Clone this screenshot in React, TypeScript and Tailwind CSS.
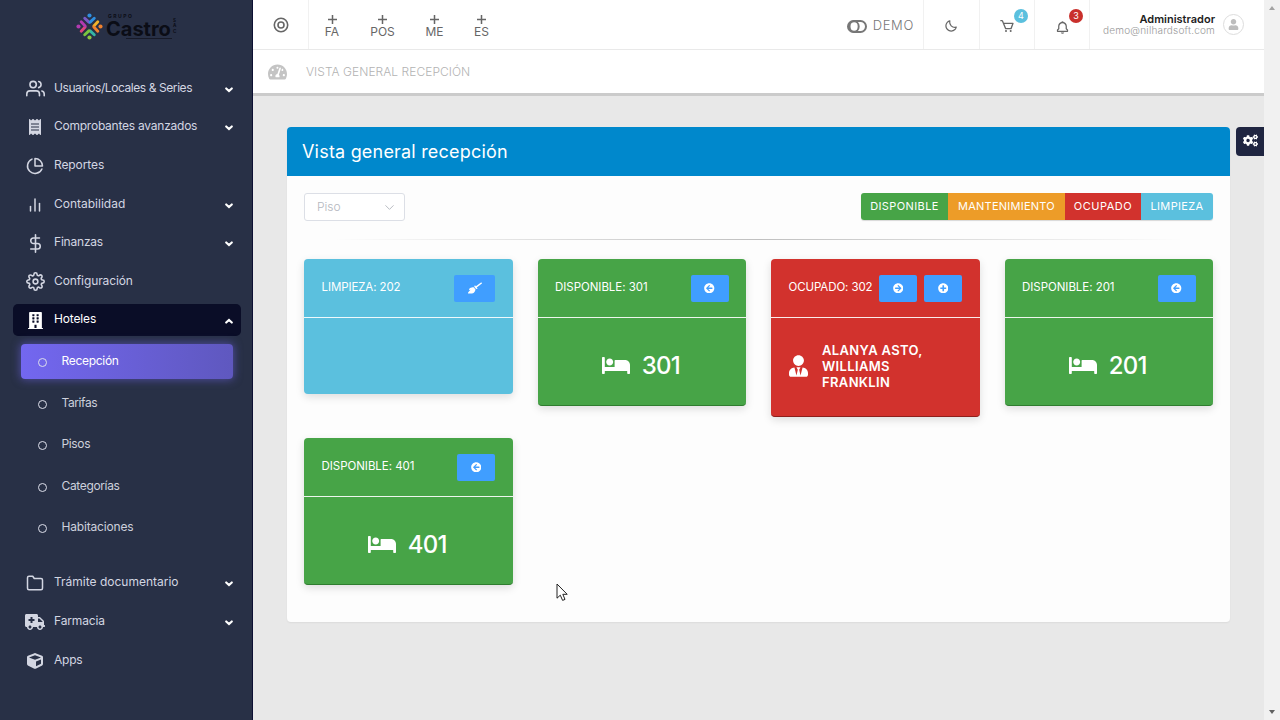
import type { ReactNode } from "react";
import {
  FiUsers,
  FiPieChart,
  FiBarChart2,
  FiDollarSign,
  FiSettings,
  FiFolder,
  FiChevronDown,
} from "react-icons/fi";
import {
  FaReceipt,
  FaBuilding,
  FaAmbulance,
  FaCube,
  FaTachometerAlt,
  FaBed,
  FaUserTie,
  FaBroom,
  FaArrowCircleLeft,
  FaArrowCircleRight,
  FaPlusCircle,
  FaCogs,
  FaUser,
} from "react-icons/fa";
import { BiCart, BiBell, BiMoon } from "react-icons/bi";

function Logo() {
  const petals = [
    { angle: 0, left: "#7a5bc7", right: "#2f8fe0", dot: "#2f8fe0" },
    { angle: 90, left: "#f3b229", right: "#f0822e", dot: "#f0822e" },
    { angle: 180, left: "#35b6a5", right: "#7cc63f", dot: "#8cc63f" },
    { angle: 270, left: "#e0457b", right: "#b13ab0", dot: "#b13ab0" },
  ];
  return (
    <div className="ml-[76px] flex h-[28px] w-[102px] items-center">
      <svg viewBox="-13 -13 26 26" className="h-[27px] w-[27px] shrink-0">
        {petals.map((p) => (
          <g key={p.angle} transform={`rotate(${p.angle})`} fill="none" strokeWidth="2.8" strokeLinecap="round">
            <circle cx="0" cy="-10.6" r="2" fill={p.dot} />
            <path d="M-4.6 -8 L-0.6 -4.2" stroke={p.left} />
            <path d="M4.6 -8 L0.6 -4.2" stroke={p.right} />
          </g>
        ))}
      </svg>
      <div className="flex w-[66px] flex-col pl-[3px] text-[#0b0d16]">
        <span className="pl-[2px] text-[5px] leading-[5px] font-bold tracking-[1.5px]">GRUPO</span>
        <span className="text-[20px] leading-[20px] font-bold">Castro</span>
        <span className="-mt-px ml-[20px] h-px w-[46px] bg-[#171a28]" />
      </div>
      <div className="ml-[4px] flex flex-col text-[4.5px] leading-[5.5px] font-bold text-[#0b0d16]">
        <span>S</span>
        <span>A</span>
        <span>C</span>
      </div>
    </div>
  );
}

function Caret({ up }: { up?: boolean }) {
  return (
    <svg viewBox="0 0 8 6" className={`mt-[2px] h-[6px] w-[8px] ${up ? "rotate-180" : ""}`} fill="none" stroke="#fff" strokeWidth="2.1" strokeLinecap="round">
      <path d="M1.2 1.4 L4 4.1 L6.8 1.4" />
    </svg>
  );
}

type NavProps = { icon: ReactNode; label: string; arrow?: "down" | "up"; active?: boolean; track?: string };

function NavItem({ icon, label, arrow, active, track = "" }: NavProps) {
  return (
    <div
      className={`mx-[13px] flex h-[32px] w-[228px] items-center rounded-[5px] pr-[8px] pl-[12px] text-[12px] ${
        active ? "bg-[#0a0d27] text-white" : "text-[#d3d6e2]"
      }`}
    >
      <span className="flex w-[20px] shrink-0 justify-center">{icon}</span>
      <span className={`-mt-[2px] ml-[9px] flex-1 whitespace-nowrap ${track}`}>{label}</span>
      {arrow && <Caret up={arrow === "up"} />}
    </div>
  );
}

function SubItem({ label, active, track = "" }: { label: string; active?: boolean; track?: string }) {
  return (
    <div
      className={`ml-[21px] flex h-[35px] w-[212px] items-center rounded-[4px] pl-[17px] text-[12px] ${
        active
          ? "bg-linear-to-r from-[#7367f0] to-[#5f58bf] text-white shadow-[0_0_8px_1px_rgba(115,103,240,0.5)]"
          : "text-[#cdd0dc]"
      }`}
    >
      <span className="mt-[2px] size-[9px] rounded-full border-[1.5px] border-[#dcdeea]" />
      <span className={`-mt-px ml-[14.5px] ${track}`}>{label}</span>
    </div>
  );
}

function Sidebar() {
  return (
    <aside className="flex h-full w-[253px] shrink-0 flex-col border-r border-[#0d1033] bg-[#283046] pt-[12px]">
      <Logo />
      <nav className="mt-[32.6px] flex flex-col gap-[6.65px]">
        <NavItem icon={<FiUsers className="size-[19px]" />} label="Usuarios/Locales & Series" arrow="down" track="tracking-[-0.42px]" />
        <NavItem icon={<FaReceipt className="h-[16px] w-[14px]" />} label="Comprobantes avanzados" arrow="down" track="tracking-[-0.24px]" />
        <NavItem icon={<FiPieChart className="size-[18px]" />} label="Reportes" track="tracking-[-0.1px]" />
        <NavItem icon={<FiBarChart2 className="size-[18px]" />} label="Contabilidad" arrow="down" />
        <NavItem icon={<FiDollarSign className="size-[19px]" />} label="Finanzas" arrow="down" track="tracking-[-0.2px]" />
        <NavItem icon={<FiSettings className="size-[19px]" />} label="Configuración" track="tracking-[-0.1px]" />
        <NavItem icon={<FaBuilding className="h-[17px] w-[15px]" />} label="Hoteles" arrow="up" active track="tracking-[-0.15px]" />
      </nav>
      <div className="mt-[8px] flex flex-col gap-[6.4px]">
        <SubItem label="Recepción" active track="tracking-[-0.3px]" />
        <SubItem label="Tarifas" track="tracking-[-0.4px]" />
        <SubItem label="Pisos" track="tracking-[-0.35px]" />
        <SubItem label="Categorías" track="tracking-[-0.35px]" />
        <SubItem label="Habitaciones" track="tracking-[-0.17px]" />
      </div>
      <nav className="mt-[22px] flex flex-col gap-[7px]">
        <NavItem icon={<FiFolder className="size-[18px]" />} label="Trámite documentario" arrow="down" />
        <NavItem icon={<FaAmbulance className="h-[16px] w-[20px]" />} label="Farmacia" arrow="down" track="tracking-[-0.15px]" />
        <NavItem icon={<FaCube className="size-[16px]" />} label="Apps" track="tracking-[-0.2px]" />
      </nav>
    </aside>
  );
}

function Shortcut({ label, width }: { label: string; width: string }) {
  return (
    <div className={`flex flex-col items-center text-[#666] ${width}`}>
      <svg viewBox="0 0 9 9" className="h-[9px] w-[9px]" stroke="currentColor" strokeWidth="1.5">
        <path d="M4.5 0V9M0 4.5H9" />
      </svg>
      <span className="mt-px text-[12px] leading-[14px]">{label}</span>
    </div>
  );
}

function Header() {
  return (
    <header className="flex h-[50px] shrink-0 border-b border-[#e9e9e9] bg-white">
      <div className="flex w-[56px] items-center justify-center border-r border-[#f1f1f1] text-[#666]">
        <svg viewBox="0 0 16 16" className="h-[16px] w-[16px]" fill="none" stroke="currentColor" strokeWidth="1.6">
          <circle cx="8" cy="8" r="6.7" />
          <circle cx="8" cy="8" r="3" />
        </svg>
      </div>
      <div className="flex pt-[15px]">
        <Shortcut label="FA" width="w-[46px]" />
        <Shortcut label="POS" width="w-[55px]" />
        <Shortcut label="ME" width="w-[49px]" />
        <Shortcut label="ES" width="w-[45px]" />
      </div>
      <div className="ml-auto flex items-center pt-[3px] pr-[9px] text-[#777]">
        <svg viewBox="0 0 20 13" className="h-[13px] w-[20px]" fill="none" stroke="currentColor" strokeWidth="2">
          <rect x="1" y="1" width="18" height="11" rx="5.5" />
          <ellipse cx="7.1" cy="6.5" rx="4.6" ry="5.2" />
        </svg>
        <span className="ml-[6px] text-[13px] font-light tracking-[0.65px]">DEMO</span>
      </div>
      <div className="flex w-[56px] items-center justify-center border-l border-[#f1f1f1] pt-[3px] pr-[2px] text-[#666]">
        <BiMoon className="size-[14px]" />
      </div>
      <div className="relative flex w-[55px] items-center justify-center border-l border-[#f1f1f1] pt-[3px] text-[#666]">
        <BiCart className="size-[16px]" />
        <span className="absolute top-[9px] left-[34px] flex size-[14px] items-center justify-center rounded-full bg-[#5bc0de] text-[9px] text-white">4</span>
      </div>
      <div className="relative flex w-[55px] items-center justify-center border-l border-[#f1f1f1] pt-[5px] text-[#666]">
        <BiBell className="size-[15px]" />
        <span className="absolute top-[9px] left-[34px] flex size-[14px] items-center justify-center rounded-full bg-[#c9302c] text-[9px] text-white">3</span>
      </div>
      <div className="flex w-[175px] items-center border-l border-[#f1f1f1] pl-[13px]">
        <div className="flex w-[112px] flex-col items-end whitespace-nowrap">
          <span className="text-[11px] leading-[11px] font-semibold text-[#1d1d1d]">Administrador</span>
          <span className="text-[10px] leading-[10px] font-light tracking-[0.2px] text-[#999]">demo@nilhardsoft.com</span>
        </div>
        <span className="ml-[8px] flex size-[21px] items-center justify-center rounded-full border border-[#ddd] text-[#bdbdbd]">
          <FaUser className="size-[11px]" />
        </span>
      </div>
    </header>
  );
}

function ActionButton({ children, width = "w-[38px]" }: { children: ReactNode; width?: string }) {
  return (
    <button className={`flex h-[27px] items-center justify-center rounded-[2px] bg-[#409eff] text-white ${width}`}>{children}</button>
  );
}

type RoomProps = { title: string; color: string; height: string; actions: ReactNode; children?: ReactNode; track?: string };

function RoomCard({ title, color, height, actions, children, track = "tracking-[-0.1px]" }: RoomProps) {
  return (
    <section className={`flex flex-col rounded-[4px] text-white shadow-[0_3px_8px_rgba(0,0,0,0.13)] ${color} ${height}`}>
      <div className="flex h-[59px] shrink-0 items-center justify-between border-b border-white/90 pr-[17.5px] pl-[17.5px]">
        <span className={`text-[11.5px] whitespace-nowrap ${track}`}>{title}</span>
        <div className="flex gap-[7px]">{actions}</div>
      </div>
      {children}
    </section>
  );
}

function RoomNumber({ value }: { value: string }) {
  return (
    <div className="flex flex-1 items-center justify-center pt-[8px] pr-[2px]">
      <FaBed className="h-[23px] w-[28px]" />
      <span className="ml-[12px] text-[24px] leading-[28px] font-medium tracking-[-0.8px]">{value}</span>
    </div>
  );
}

function FreeRoom({ room }: { room: string }) {
  return (
    <RoomCard
      title={`DISPONIBLE: ${room}`}
      color="bg-[#47a447] border-b border-[#2f7d2f]"
      height="h-[147px]"
      track="tracking-[-0.04px]"
      actions={
        <ActionButton>
          <FaArrowCircleLeft className="size-[10.5px]" />
        </ActionButton>
      }
    >
      <RoomNumber value={room} />
    </RoomCard>
  );
}

function Legend() {
  return (
    <div className="flex h-[27px] w-[352px] overflow-hidden rounded-[3px] text-[11px] text-white shadow-[0_1px_1px_rgba(0,0,0,0.15)]">
      <span className="flex w-[87px] items-center justify-center bg-[#47a447] tracking-[0.4px]">DISPONIBLE</span>
      <span className="flex w-[117px] items-center justify-center bg-[#ed9c28] tracking-[0.25px]">MANTENIMIENTO</span>
      <span className="flex w-[76px] items-center justify-center bg-[#d2322d] tracking-[0.5px]">OCUPADO</span>
      <span className="flex w-[72px] items-center justify-center bg-[#5bc0de] tracking-[0.35px]">LIMPIEZA</span>
    </div>
  );
}

export default function App() {
  return (
    <div className="relative flex h-[720px] w-[1280px] overflow-hidden bg-[#e8e8e8] font-['Inter','Liberation_Sans',sans-serif]">
      <Sidebar />
      <div className="flex min-w-0 flex-1 flex-col">
        <Header />
        <div className="flex h-[46px] shrink-0 items-center border-b-[3px] border-[#cbcbcb] bg-white pl-[15px]">
          <FaTachometerAlt className="h-[18px] w-[19px] text-[#c4c4c4]" />
          <span className="ml-[19px] text-[12px] font-light tracking-[0.04px] text-[#b3b3b3]">VISTA GENERAL RECEPCIÓN</span>
        </div>
        <div className="flex items-start pt-[31px] pl-[34px]">
          <main className="h-[495px] w-[943px] overflow-hidden rounded-[4px] bg-[#fdfdfd] shadow-[0_1px_2px_rgba(0,0,0,0.06)]">
            <h1 className="flex h-[49px] items-center bg-[#0088cc] pl-[15px] text-[18px] tracking-[0.2px] text-white">
              Vista general recepción
            </h1>
            <div className="px-[17px] pt-[17px]">
              <div className="flex items-start justify-between">
                <div className="flex h-[28px] w-[101px] items-center justify-between rounded-[3px] border border-[#dcdfe6] bg-white pr-[7px] pl-[12px] text-[12px] font-light text-[#b4b7be]">
                  Piso
                  <FiChevronDown className="size-[15px] stroke-[1.5]" />
                </div>
                <Legend />
              </div>
              <div className="mx-[30px] mt-[18px] h-px bg-linear-to-r from-transparent via-[#c0c0c0] to-transparent" />
              <div className="mt-[19px] grid grid-cols-4 items-start gap-x-[25px] gap-y-[21px]">
                <RoomCard
                  title="LIMPIEZA: 202"
                  color="bg-[#5bc0de]"
                  height="h-[135px]"
                  actions={
                    <ActionButton width="w-[41px]">
                      <FaBroom className="h-[12px] w-[14px]" />
                    </ActionButton>
                  }
                />
                <FreeRoom room="301" />
                <RoomCard
                  title="OCUPADO: 302"
                  color="bg-[#d2322d] border-b border-[#8f1f1b]"
                  height="h-[158px]"
                  actions={
                    <>
                      <ActionButton>
                        <FaArrowCircleRight className="size-[10.5px]" />
                      </ActionButton>
                      <ActionButton>
                        <FaPlusCircle className="size-[10.5px]" />
                      </ActionButton>
                    </>
                  }
                >
                  <div className="flex flex-1 items-center pb-[2px] pl-[18px]">
                    <FaUserTie className="h-[22px] w-[19px]" />
                    <p className="ml-[14px] w-[116px] text-[13px] leading-[16px] font-semibold tracking-[0.35px]">ALANYA ASTO, WILLIAMS FRANKLIN</p>
                  </div>
                </RoomCard>
                <FreeRoom room="201" />
                <FreeRoom room="401" />
              </div>
            </div>
          </main>
          <button className="ml-[6px] flex h-[29px] w-[28px] items-center justify-center rounded-l-[4px] bg-[#1f2541] pb-[2px] pl-px text-white">
            <FaCogs className="size-[15px]" />
          </button>
        </div>
      </div>
      <div className="flex w-[16px] shrink-0 flex-col items-center justify-between bg-[#f1f1f1] pt-[6px] pb-[6px]">
        <span className="h-0 w-0 border-x-[3.5px] border-b-[4px] border-x-transparent border-b-[#a3a3a3]" />
        <span className="h-0 w-0 border-x-[3.5px] border-t-[4px] border-x-transparent border-t-[#606060]" />
      </div>
      <svg viewBox="0 0 12 19" className="absolute top-[583px] left-[556px] h-[19px] w-[12px]">
        <path d="M1 1V15.2L4.3 12.2L6.6 17.4L9 16.4L6.8 11.3H11.2Z" fill="#fff" stroke="#222" strokeWidth="1" />
      </svg>
    </div>
  );
}
